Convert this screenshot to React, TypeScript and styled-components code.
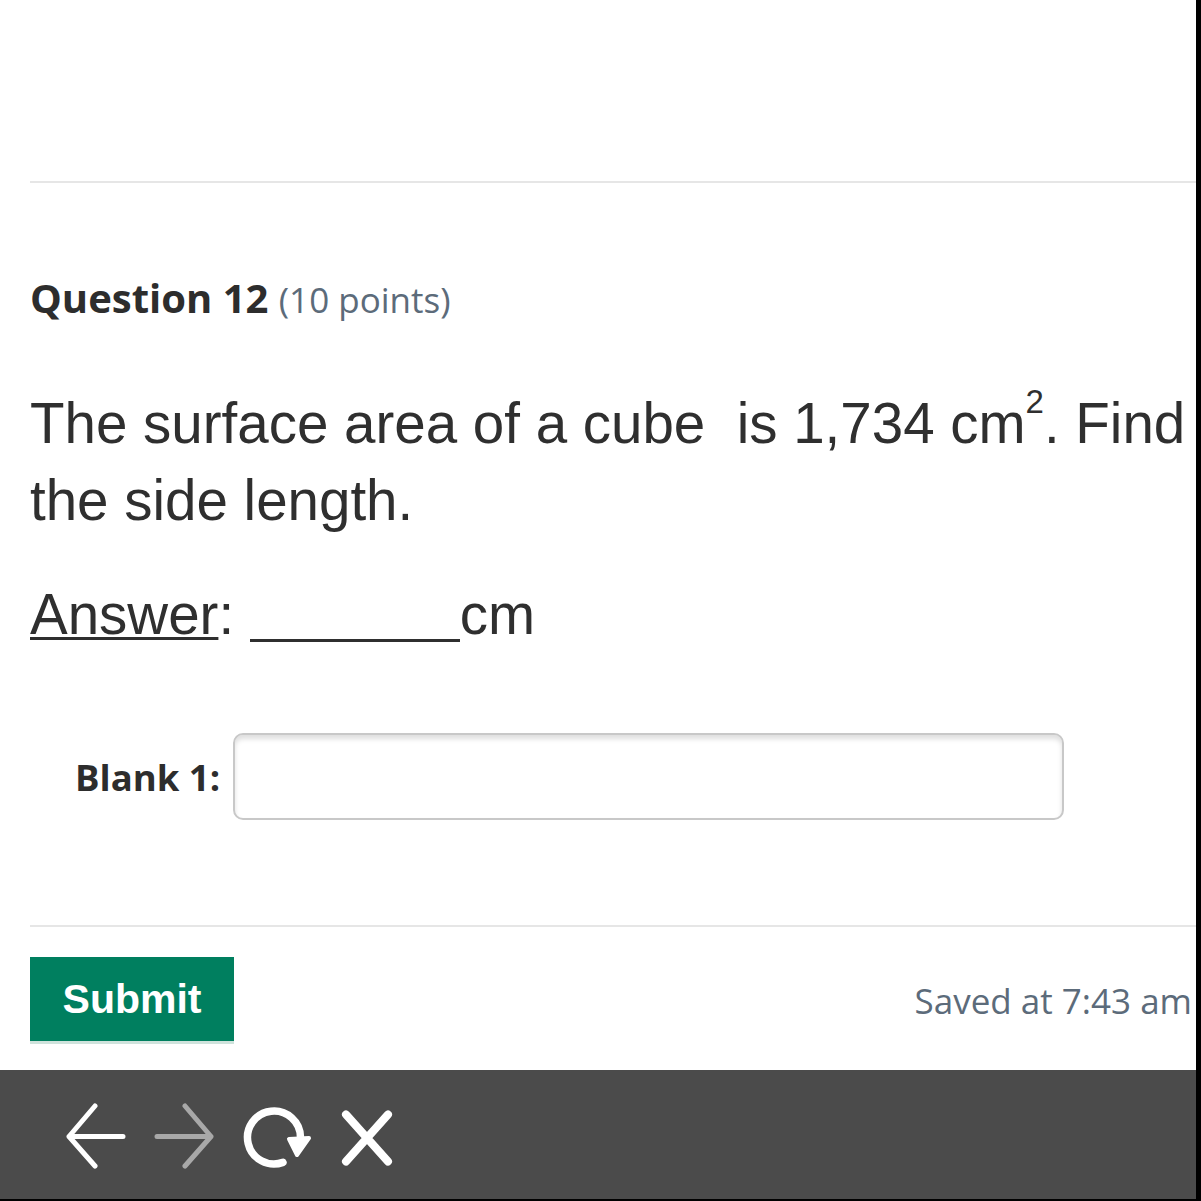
import React from "react";
import styled, { createGlobalStyle } from "styled-components";

const GlobalStyle = createGlobalStyle`
  html, body { margin: 0; padding: 0; background: #ffffff; }
  * { box-sizing: border-box; }
`;

const Page = styled.div`
  width: 1201px;
  height: 1201px;
  background: #ffffff;
  border-right: 5px solid #000000;
  border-bottom: 2px solid #000000;
  display: flex;
  flex-direction: column;
  overflow: hidden;
`;

const Content = styled.main`
  flex: 1;
  padding: 181px 0 0 30px;
  display: flex;
  flex-direction: column;
`;

const Divider = styled.hr<{ $top?: number }>`
  margin: ${(p) => p.$top ?? 0}px 0 0 0;
  border: none;
  height: 2px;
  background: #e6e6e6;
  width: 100%;
`;

const Heading = styled.h2`
  margin: 91px 0 0 0;
  font-family: "Open Sans", "Liberation Sans", sans-serif;
  font-size: 40px;
  line-height: 47px;
  font-weight: 700;
  color: #2d2d2d;
`;

const Points = styled.span`
  font-size: 35px;
  font-weight: 400;
  color: #5c6b7a;
`;

const Prompt = styled.p<{ $top: number }>`
  margin: ${(p) => p.$top}px 0 0 0;
  font-family: "Liberation Sans", Arial, sans-serif;
  font-size: 56.5px;
  line-height: 77px;
  color: #2f2f2f;
  white-space: nowrap;
`;

const Sup = styled.span`
  font-size: 33px;
  line-height: 0;
  vertical-align: 30px;
`;

const Underlined = styled.span`
  text-decoration: underline;
  text-decoration-thickness: 3px;
  text-underline-offset: 3px;
`;

const BlankLine = styled.span`
  display: inline-block;
  width: 210px;
  height: 0;
  border-bottom: 3px solid #2f2f2f;
  vertical-align: -8px;
`;

const BlankRow = styled.div`
  margin: 80px 0 0 45px;
  display: flex;
  align-items: center;
  gap: 13px;
`;

const BlankLabel = styled.label`
  font-family: "Open Sans", "Liberation Sans", sans-serif;
  font-size: 36.5px;
  font-weight: 700;
  color: #2d2d2d;
`;

const BlankInput = styled.input`
  width: 831px;
  height: 87px;
  border: 2px solid #c8c8c8;
  border-radius: 10px;
  box-shadow: inset 0 4px 5px rgba(0, 0, 0, 0.13);
  background: #ffffff;
  outline: none;
`;

const Footer = styled.div`
  margin-top: 30px;
  display: flex;
  align-items: center;
  justify-content: space-between;
  padding-right: 4px;
`;

const SubmitButton = styled.button`
  width: 204px;
  height: 87px;
  border: none;
  border-bottom: 3px solid #cfe3dc;
  background: #007f5f;
  color: #ffffff;
  font-family: "Liberation Sans", Arial, sans-serif;
  font-weight: 700;
  font-size: 41px;
  padding: 0;
  cursor: pointer;
`;

const Saved = styled.span`
  font-family: "Open Sans", "Liberation Sans", sans-serif;
  font-size: 35px;
  color: #5c6b7a;
`;

const Bar = styled.nav`
  height: 129px;
  flex: 0 0 129px;
  background: #4b4b4b;
  display: flex;
  align-items: center;
  gap: 26px;
  padding-left: 65px;
`;

const Icon = styled.svg`
  display: block;
  height: 68px;
  flex: none;
`;

export default function App() {
  return (
    <>
      <GlobalStyle />
      <Page>
        <Content>
          <Divider />
          <Heading>
            Question 12 <Points>(10 points)</Points>
          </Heading>
          <Prompt $top={62}>
            The surface area of a cube &nbsp;is 1,734 cm<Sup>2</Sup>. Find
            <br />
            the side length.
          </Prompt>
          <Prompt $top={37}>
            <Underlined>Answer</Underlined>: <BlankLine />cm
          </Prompt>
          <BlankRow>
            <BlankLabel htmlFor="blank1">Blank 1:</BlankLabel>
            <BlankInput id="blank1" type="text" />
          </BlankRow>
          <Divider $top={105} />
          <Footer>
            <SubmitButton>Submit</SubmitButton>
            <Saved>Saved at 7:43 am</Saved>
          </Footer>
        </Content>
        <Bar>
          <Icon width="62" viewBox="0 0 62 68" fill="none" stroke="#ffffff" strokeWidth="5" strokeLinecap="round" strokeLinejoin="round">
            <path d="M58 35.5H4M30 5L4 35.5L30 65" />
          </Icon>
          <Icon width="62" viewBox="0 0 62 68" fill="none" stroke="#a8a8a8" strokeWidth="5" strokeLinecap="round" strokeLinejoin="round">
            <path d="M4 35.5H58M32 5L58 35.5L32 65" />
          </Icon>
          <Icon width="72" viewBox="0 0 72 68">
            <path d="M42 61.4A26.5 26.5 0 1 1 59.5 36.5" fill="none" stroke="#ffffff" strokeWidth="7.5" strokeLinecap="round" />
            <polygon points="48,38 68,37 56,54" fill="#ffffff" stroke="#ffffff" strokeWidth="4" strokeLinejoin="round" />
          </Icon>
          <Icon width="56" viewBox="0 0 56 68" fill="none" stroke="#ffffff" strokeWidth="8" strokeLinecap="round">
            <path d="M7 13.5L49 60.5M49 13.5L7 60.5" />
          </Icon>
        </Bar>
      </Page>
    </>
  );
}
